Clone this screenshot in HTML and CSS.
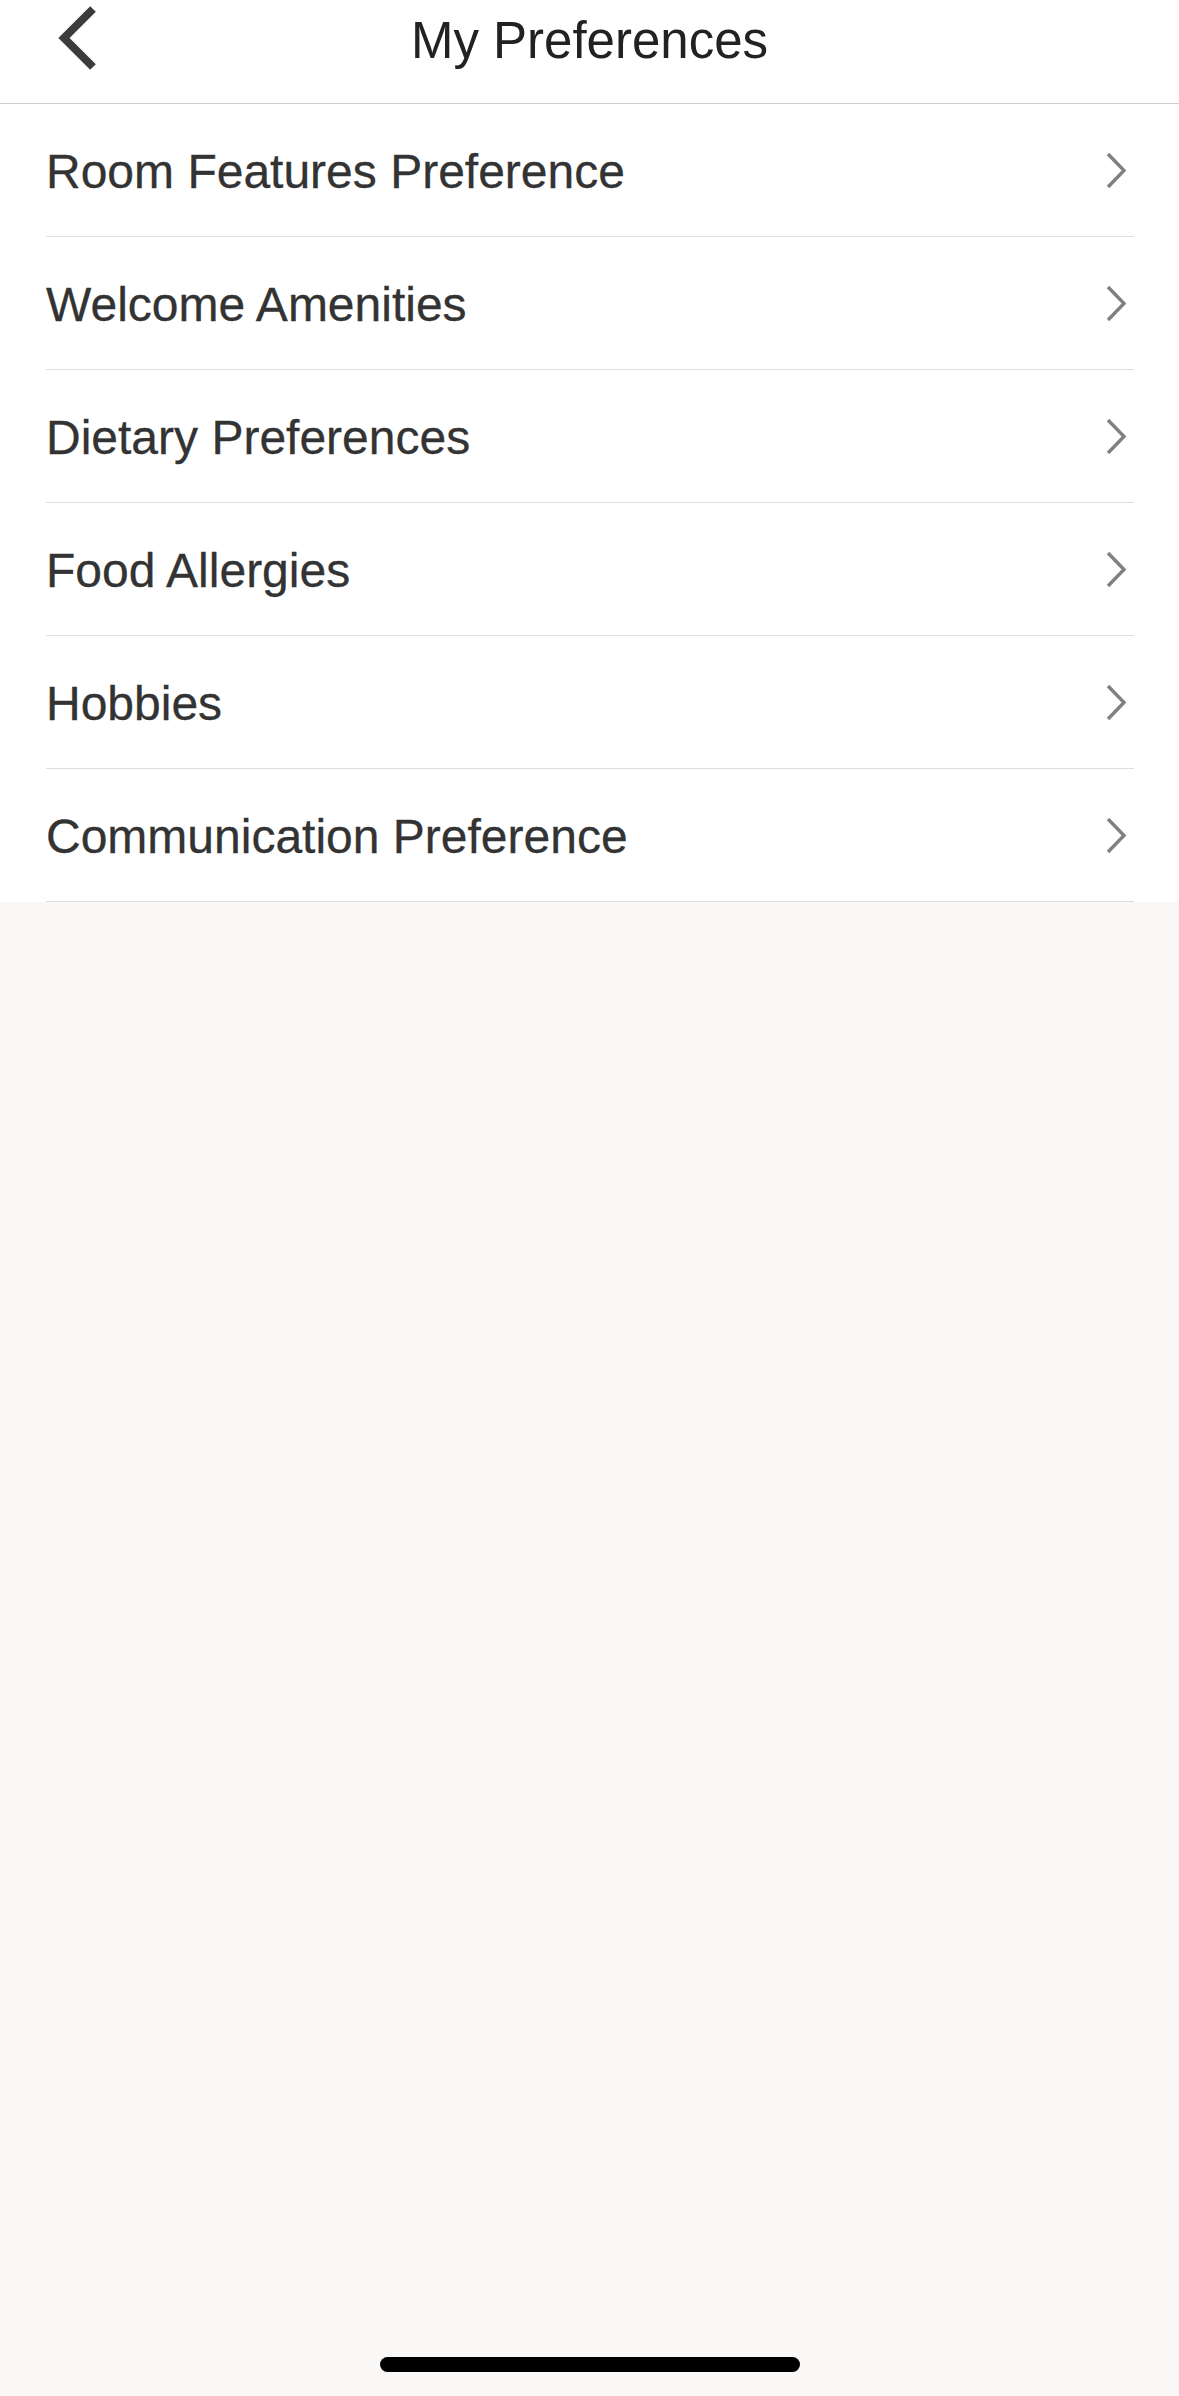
FILE: index.html
```html
<!DOCTYPE html>
<html lang="en">
<head>
<meta charset="utf-8">
<title>My Preferences</title>
<link rel="stylesheet" href="styles.css">
</head>
<body>
<div class="page">
  <header class="topbar">
    <div class="back">
      <svg width="44" height="76" viewBox="0 0 44 76" aria-hidden="true">
        <polyline points="39,9 10,38 39,67" fill="none" stroke="#3c3c3c" stroke-width="8"/>
      </svg>
    </div>
    <h1 class="title">My Preferences</h1>
    <div></div>
  </header>
  <ul class="list">
    <li class="row"><span class="label">Room Features Preference</span><svg class="chev" width="24" height="38" viewBox="0 0 24 38" aria-hidden="true"><polyline points="4,2 20,18.5 4,35" fill="none" stroke="#808080" stroke-width="3.4"/></svg></li>
    <li class="row"><span class="label">Welcome Amenities</span><svg class="chev" width="24" height="38" viewBox="0 0 24 38" aria-hidden="true"><polyline points="4,2 20,18.5 4,35" fill="none" stroke="#808080" stroke-width="3.4"/></svg></li>
    <li class="row"><span class="label">Dietary Preferences</span><svg class="chev" width="24" height="38" viewBox="0 0 24 38" aria-hidden="true"><polyline points="4,2 20,18.5 4,35" fill="none" stroke="#808080" stroke-width="3.4"/></svg></li>
    <li class="row"><span class="label">Food Allergies</span><svg class="chev" width="24" height="38" viewBox="0 0 24 38" aria-hidden="true"><polyline points="4,2 20,18.5 4,35" fill="none" stroke="#808080" stroke-width="3.4"/></svg></li>
    <li class="row"><span class="label">Hobbies</span><svg class="chev" width="24" height="38" viewBox="0 0 24 38" aria-hidden="true"><polyline points="4,2 20,18.5 4,35" fill="none" stroke="#808080" stroke-width="3.4"/></svg></li>
    <li class="row"><span class="label">Communication Preference</span><svg class="chev" width="24" height="38" viewBox="0 0 24 38" aria-hidden="true"><polyline points="4,2 20,18.5 4,35" fill="none" stroke="#808080" stroke-width="3.4"/></svg></li>
  </ul>
  <div class="home-indicator"></div>
</div>
</body>
</html>
```

FILE: styles.css
```css
html, body {
  margin: 0;
  padding: 0;
}
body {
  background: #f9f8f6;
  font-family: "Liberation Sans", Arial, sans-serif;
}
.page {
  position: relative;
  width: 1179px;
  height: 2396px;
  overflow: hidden;
}
.topbar {
  background: #ffffff;
  height: 104px;
  box-sizing: border-box;
  border-bottom: 1.5px solid #cfcfcf;
  display: grid;
  grid-template-columns: 1fr auto 1fr;
  align-items: start;
}
.back {
  padding-left: 54px;
}
.back svg {
  display: block;
}
.title {
  margin: 0;
  padding-top: 11px;
  font-size: 51px;
  font-weight: normal;
  color: #222222;
  line-height: normal;
  white-space: nowrap;
}
.list {
  list-style: none;
  margin: 0;
  padding: 0;
  background: #ffffff;
}
.row {
  margin: 0 45px 0 46px;
  height: 133px;
  box-sizing: border-box;
  border-bottom: 1.5px solid #dedede;
  display: flex;
  align-items: center;
  justify-content: space-between;
}
.label {
  font-size: 48px;
  color: #333333;
  white-space: nowrap;
  padding-top: 3px;
  -webkit-text-stroke: 0.3px #333333;
}
.chev {
  display: block;
  margin-right: 6px;
  margin-top: 2px;
}
.home-indicator {
  position: absolute;
  left: 380px;
  top: 2357px;
  width: 420px;
  height: 15px;
  border-radius: 8px;
  background: #000000;
}
```
